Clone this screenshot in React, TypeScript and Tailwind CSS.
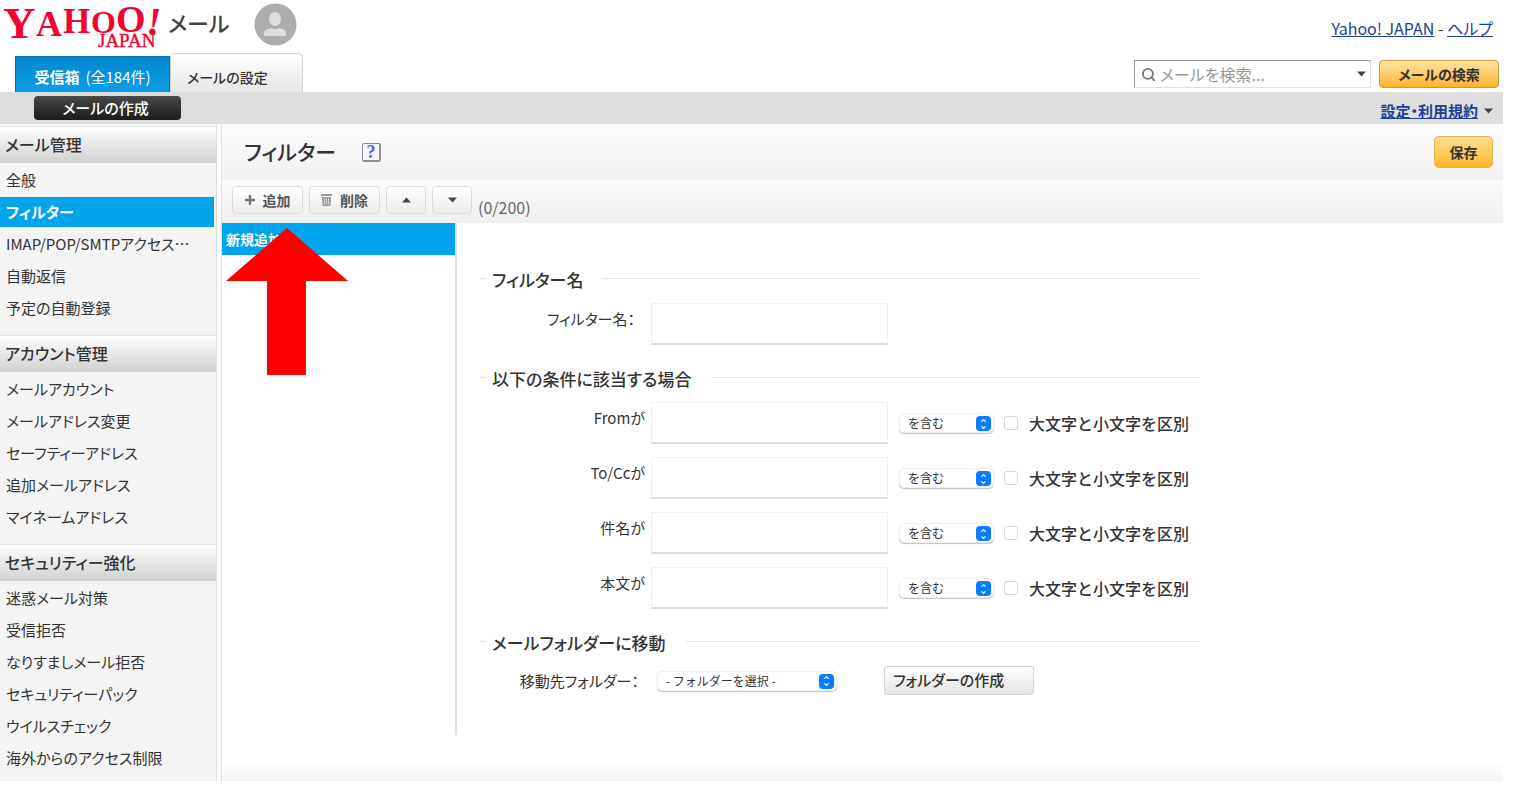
import React, { useState } from 'react';
import { ChevronDown, ChevronUp, Search } from 'lucide-react';

interface MenuSection {
  title: string;
  items: string[];
}

const SECTIONS: MenuSection[] = [
  {
    title: 'メール管理',
    items: ['全般', 'フィルター', 'IMAP/POP/SMTPアクセス…', '自動返信', '予定の自動登録'],
  },
  {
    title: 'アカウント管理',
    items: ['メールアカウント', 'メールアドレス変更', 'セーフティーアドレス', '追加メールアドレス', 'マイネームアドレス'],
  },
  {
    title: 'セキュリティー強化',
    items: ['迷惑メール対策', '受信拒否', 'なりすましメール拒否', 'セキュリティーパック', 'ウイルスチェック', '海外からのアクセス制限'],
  },
];

const CONDITIONS = [
  { id: 'from', label: 'Fromが' },
  { id: 'tocc', label: 'To/Ccが' },
  { id: 'subject', label: '件名が' },
  { id: 'body', label: '本文が' },
];

// ── Icons ─────────────────────────────────────────────────────────────────────

const Logo: React.FC = () => (
  <svg width="168" height="52" viewBox="0 0 168 52" role="img" aria-label="Yahoo! JAPAN" className="block">
    <g fill="#f5002f" fontFamily="'Liberation Serif', serif" fontWeight="bold">
      <text x="3" y="38" fontSize="45">Y</text>
      <text x="36" y="36" fontSize="36">A</text>
      <text x="63" y="33" fontSize="35">H</text>
      <text x="91" y="33" fontSize="32">O</text>
      <text x="116" y="32" fontSize="38">O</text>
      <text x="146" y="35" fontSize="40" fontStyle="italic">!</text>
      <text x="98" y="47" fontSize="19" fontWeight="normal" stroke="#f5002f" strokeWidth="0.4">JAPAN</text>
    </g>
  </svg>
);

const Avatar: React.FC = () => (
  <svg width="43" height="43" viewBox="0 0 43 43" aria-hidden="true">
    <circle cx="21.500" cy="21.500" r="21" fill="#adadad" />
    <ellipse cx="21" cy="16" rx="6" ry="7" fill="#dedede" />
    <path d="M10 33v-3c0-3 3-4 7-5l2 1h4l2-1c4 1 7 2 7 5v3z" fill="#dedede" />
  </svg>
);

const Triangle: React.FC<{ up?: boolean }> = ({ up }) => (
  <svg width="9" height="6" viewBox="0 0 9 6" aria-hidden="true">
    <path d={up ? 'M0 5.500L4.500 0.500L9 5.500z' : 'M0 0.500L4.500 5.500L9 0.500z'} fill="#444" />
  </svg>
);

const TrashIcon: React.FC = () => (
  <svg width="11" height="12" viewBox="0 0 11 12" aria-hidden="true">
    <path d="M0 0h11v2H0zM1 3h9l-.5 9h-8z" fill="#999" />
    <path d="M3.500 4v7M5.500 4v7M7.500 4v7" stroke="#ddd" strokeWidth="0.8" />
  </svg>
);

const PlusIcon: React.FC = () => (
  <svg width="10" height="10" viewBox="0 0 10 10" aria-hidden="true">
    <path d="M5 0v10M0 5h10" stroke="#777" strokeWidth="2.400" />
  </svg>
);

// ── Controls ──────────────────────────────────────────────────────────────────

interface PopupSelectProps {
  id: string;
  label?: string;
  option: string;
  className: string;
}

const PopupSelect: React.FC<PopupSelectProps> = ({ id, label, option, className }) => (
  <div className={`relative ${className}`}>
    <select
      id={id}
      aria-label={label}
      className="block h-5 w-full appearance-none rounded-[5px] border border-[#eeeeee] bg-white pl-2 text-xs leading-none text-[#333] shadow-[0_1px_1px_#c4c4c4] [font-feature-settings:normal]"
    >
      <option>{option}</option>
    </select>
    <span className="pointer-events-none absolute top-[3px] right-[3px] flex h-[15px] w-[15px] flex-col items-center justify-center rounded-[4px] bg-[#0a7cff] text-white">
      <ChevronUp size={7} strokeWidth={4} />
      <ChevronDown size={7} strokeWidth={4} />
    </span>
  </div>
);

const ToolButton: React.FC<{ label?: string; className: string; children: React.ReactNode }> = ({ label, className, children }) => (
  <button
    type="button"
    aria-label={label}
    className={`flex h-7 items-center justify-center gap-2 rounded-[4px] border border-[#dadada] bg-linear-to-b from-white to-[#ececec] text-sm font-bold text-[#555] ${className}`}
  >
    {children}
  </button>
);

const TextField: React.FC<{ id: string }> = ({ id }) => (
  <input
    id={id}
    type="text"
    className="h-[42px] w-[237px] border border-b-2 border-[#f1f1f1] border-b-[#dcdcdc] bg-white px-2 text-base outline-none"
  />
);

const Legend: React.FC<{ children: React.ReactNode }> = ({ children }) => (
  <legend className="ml-1.5 pt-1 pr-5 pl-1.5 text-[17px] leading-6 font-medium">{children}</legend>
);

const ConditionRow: React.FC<{ id: string; label: string }> = ({ id, label }) => (
  <div className="flex items-center">
    <label htmlFor={id} className="w-[171px] self-start pt-1 pr-1.5 text-right text-[15px] leading-6">{label}</label>
    <TextField id={id} />
    <PopupSelect id={`${id}-match`} label={`${label} 条件`} option="を含む" className="ml-[11px] w-[95px]" />
    <input
      id={`${id}-case`}
      type="checkbox"
      className="ml-2.5 h-3.5 w-3.5 appearance-none rounded-[3px] border border-[#d8d8d8] bg-white checked:bg-[#0a7cff]"
    />
    <label htmlFor={`${id}-case`} className="ml-[11px] text-base leading-6 font-medium [font-feature-settings:normal]">大文字と小文字を区別</label>
  </div>
);

// ── Page parts ────────────────────────────────────────────────────────────────

const Header: React.FC = () => (
  <header>
    <div className="flex h-[53px] items-start justify-between">
      <div className="flex items-start">
        <Logo />
        <span className="pt-2 text-[22px] leading-7 font-medium text-[#444]">メール</span>
        <span className="ml-6 pt-[3px]"><Avatar /></span>
      </div>
      <p className="pt-4 pr-2.5 text-base leading-6 text-[#333]">
        <a href="#japan" className="text-[#1d3f94] underline">Yahoo! JAPAN</a>
        {' - '}
        <a href="#help" className="text-[#1d3f94] underline">ヘルプ</a>
      </p>
    </div>

    <div className="flex h-[39px] items-end justify-between">
      <nav className="ml-[15px] flex items-end text-sm">
        <a href="#inbox" className="flex h-9 w-[155px] items-center justify-center gap-1.5 border border-b-0 border-[#0572b0] bg-linear-to-b from-[#0587d0] to-[#0a9fe6] pt-1 text-[15px] text-white">
          <span className="font-bold">受信箱</span>
          <span>(全184件)</span>
        </a>
        <a href="#settings" className="flex h-[39px] w-[133px] items-center rounded-t-[5px] border border-b-0 border-[#d0d0d0] bg-linear-to-b from-white to-[#e6e6e6] pt-2 pl-4 font-medium text-[#333]">
          メールの設定
        </a>
      </nav>
      <form className="flex items-center gap-2 pr-1 pb-1" onSubmit={e => e.preventDefault()}>
        <div className="flex h-7 w-[237px] items-center border border-[#e0e0e0] border-t-[#999] border-l-[#999] bg-white pr-1 pl-1.5">
          <Search size={15} strokeWidth={3} className="shrink-0 text-[#777]" />
          <input
            type="search"
            aria-label="メールを検索"
            placeholder="メールを検索..."
            className="ml-1 min-w-0 flex-1 text-base leading-6 outline-none placeholder:text-[#999]"
          />
          <Triangle />
        </div>
        <button type="submit" className="h-7 w-[120px] rounded-[4px] border border-[#c99a3c] bg-linear-to-b from-[#ffe4a0] to-[#ffb21a] text-sm font-bold text-[#333]">
          メールの検索
        </button>
      </form>
    </div>

    <div className="flex h-8 items-center justify-between bg-[#dedede] pr-2.5 pl-[34px]">
      <button type="button" className="h-6 w-[147px] rounded-[4px] bg-linear-to-b from-[#4a4a4a] to-[#1c1c1c] pr-1 text-[15px] leading-6 font-medium text-white">
        メールの作成
      </button>
      <a href="#terms" className="flex items-center gap-1.5 pt-1.5 text-[15px] font-bold text-[#1d3f94]">
        <span className="underline">設定・利用規約</span>
        <Triangle />
      </a>
    </div>
  </header>
);

const Sidebar: React.FC = () => (
  <nav className="w-[217px] shrink-0 border-r border-[#dcdcdc] bg-[#f4f4f4] pt-0.5">
    {SECTIONS.map(section => (
      <section key={section.title} className="pb-3 last:pb-2">
        <h2 className="flex h-[37px] items-center border-t border-[#e4e4e4] bg-linear-to-b from-white to-[#d0d0d0] pb-0.5 pl-[5px] text-base font-medium">
          {section.title}
        </h2>
        <ul className="text-[15px] text-[#333]">
          {section.items.map(item => (
            <li key={item} className="pt-0.5 pr-0.5">
              <a
                href="#menu"
                className={item === 'フィルター'
                  ? 'flex h-[30px] items-center bg-[#00a4ea] pl-1.5 font-bold text-white'
                  : 'flex h-[30px] items-center pl-1.5'}
              >
                {item}
              </a>
            </li>
          ))}
        </ul>
      </section>
    ))}
  </nav>
);

const FilterForm: React.FC = () => (
  <form className="ml-[23px] w-[720px] pt-[41px]" onSubmit={e => e.preventDefault()}>
    <fieldset className="border-t border-[#e2e2e2] pb-[18px]">
      <Legend>フィルター名</Legend>
      <div className="flex pt-[11px]">
        <label htmlFor="filter-name" className="w-[171px] pt-1 pr-4 text-right text-[15px] leading-6">フィルター名：</label>
        <TextField id="filter-name" />
      </div>
    </fieldset>

    <fieldset className="border-t border-[#e2e2e2] pb-[18px]">
      <Legend>以下の条件に該当する場合</Legend>
      <div className="flex flex-col gap-[13px] pt-[11px]">
        {CONDITIONS.map(c => <ConditionRow key={c.id} id={c.id} label={c.label} />)}
      </div>
    </fieldset>

    <fieldset className="border-t border-[#e2e2e2]">
      <Legend>メールフォルダーに移動</Legend>
      <div className="flex items-center pt-[11px]">
        <label htmlFor="folder" className="w-[171px] pr-3 text-right text-[15px] leading-6">移動先フォルダー：</label>
        <PopupSelect id="folder" option="- フォルダーを選択 -" className="ml-1.5 w-[180px]" />
        <button type="button" className="ml-[47px] h-[29px] w-[150px] rounded-[3px] border border-[#d4d4d4] bg-linear-to-b from-white to-[#e4e4e4] pl-2 text-left text-[15px] font-medium">
          フォルダーの作成
        </button>
      </div>
    </fieldset>
  </form>
);

// Red pointer that sits over the list, aimed at the add button
const Pointer: React.FC = () => (
  <svg width="122" height="147" viewBox="0 0 122 147" aria-hidden="true" className="pointer-events-none absolute top-[5px] left-1">
    <path d="M61 0L122 53H80V147H41V53H0z" fill="#fe0000" />
  </svg>
);

const Main: React.FC = () => {
  const [selected, setSelected] = useState(true);

  return (
    <main className="ml-1 flex min-w-0 flex-1 flex-col border-l border-[#e0e0e0]">
      <div className="flex h-14 items-center justify-between bg-linear-to-b from-[#fcfcfc] to-[#f1f1f1] pr-2.5 pl-[22px]">
        <div className="flex items-center gap-[26px]">
          <h1 className="text-[21px] font-medium">フィルター</h1>
          <a href="#help" aria-label="ヘルプ" className="flex h-[19px] w-[19px] items-center justify-center rounded-[2px] border border-r-2 border-b-2 border-[#8e8e98] bg-[#f4f6ff] font-['Liberation_Serif'] text-lg leading-none font-bold text-[#4a62f0]">
            ?
          </a>
        </div>
        <button type="button" className="h-8 w-[59px] rounded-[5px] border border-[#e3b04d] bg-linear-to-b from-[#ffe08f] to-[#ffb51f] text-sm font-bold text-[#333]">
          保存
        </button>
      </div>

      <div className="flex h-[43px] items-center bg-linear-to-b from-[#fbfbfb] to-[#efefef] pb-1 pl-2.5">
        <ToolButton className="w-[71px]"><PlusIcon />追加</ToolButton>
        <ToolButton className="ml-1.5 w-[71px]"><TrashIcon />削除</ToolButton>
        <ToolButton label="上へ" className="ml-1.5 w-10"><Triangle up /></ToolButton>
        <ToolButton label="下へ" className="ml-1.5 w-10"><Triangle /></ToolButton>
        <span className="ml-1.5 pt-3.5 text-base text-[#666]">(0/200)</span>
      </div>

      <div className="flex flex-1">
        <div className="relative w-[235px] shrink-0 border-r-2 border-[#dfdfdf]">
          <button
            type="button"
            onClick={() => setSelected(s => !s)}
            className={selected
              ? 'block h-8 w-full bg-[#00a4ea] pl-1 text-left text-sm font-bold text-white'
              : 'block h-8 w-full pl-1 text-left text-sm font-bold'}
          >
            新規追加
          </button>
          <Pointer />
        </div>
        <FilterForm />
      </div>
      <div className="mt-7 h-[18px] bg-linear-to-b from-white to-[#f4f4f4]" />
    </main>
  );
};

export default function App() {
  return (
    <div className="mr-[19px] bg-white font-['Noto_Sans_CJK_JP',sans-serif] text-[#333] [font-feature-settings:'palt']">
      <Header />
      <div className="flex">
        <Sidebar />
        <Main />
      </div>
    </div>
  );
}
